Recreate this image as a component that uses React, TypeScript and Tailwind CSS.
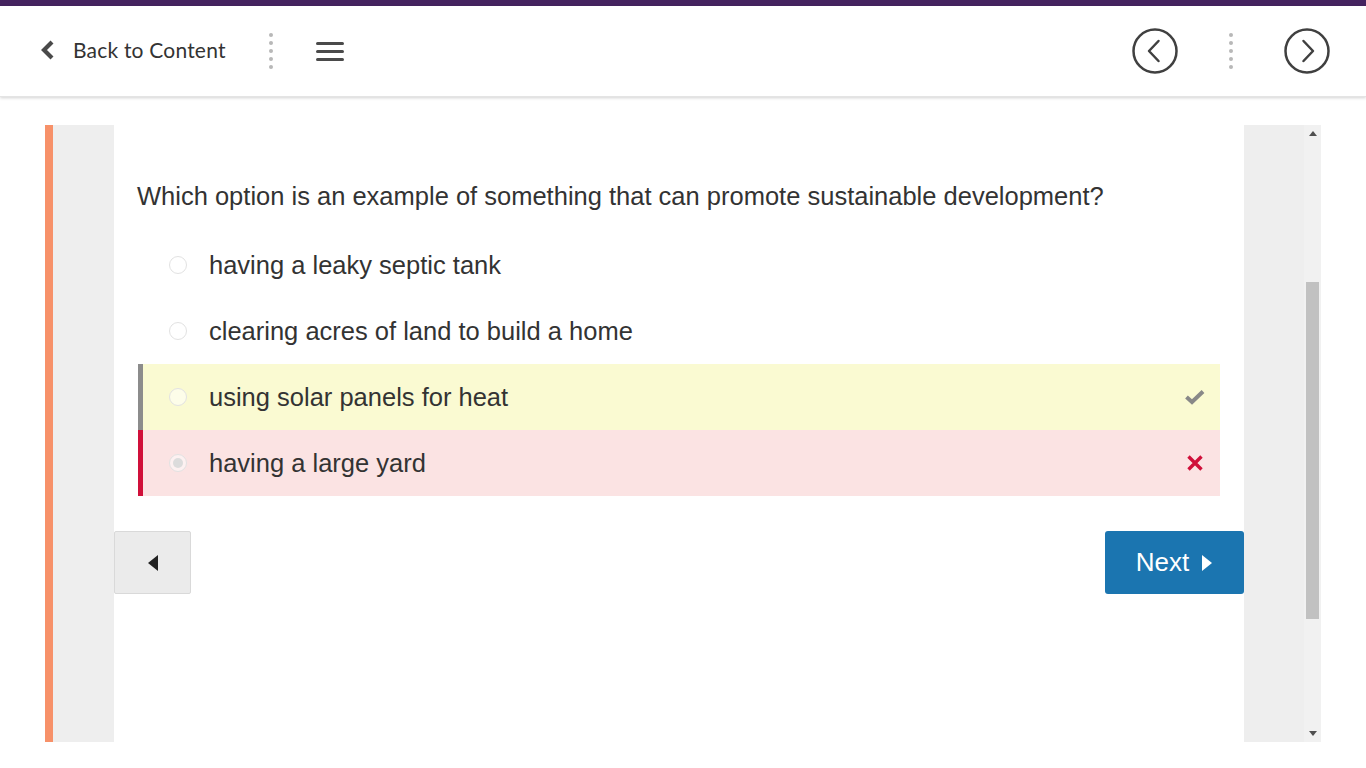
import React from "react"

const Dots = () => (
  <div className="flex flex-col items-center gap-[4px]">
    {[0, 1, 2, 3, 4].map((i) => (
      <span key={i} className="block w-[4px] h-[4px] rounded-full bg-[#b8b8b8]" />
    ))}
  </div>
)

const CircleArrow = ({ dir }: { dir: "left" | "right" }) => (
  <svg width="46" height="46" viewBox="0 0 46 46">
    <circle cx="23" cy="23" r="21.5" fill="none" stroke="#404040" strokeWidth="2.5" />
    {dir === "left" ? (
      <path d="M26.5 13 L17 23 L26.5 33" fill="none" stroke="#404040" strokeWidth="2.5" strokeLinecap="round" strokeLinejoin="round" />
    ) : (
      <path d="M19.5 13 L29 23 L19.5 33" fill="none" stroke="#404040" strokeWidth="2.5" strokeLinecap="round" strokeLinejoin="round" />
    )}
  </svg>
)

const options = [
  { text: "having a leaky septic tank", state: "none" },
  { text: "clearing acres of land to build a home", state: "none" },
  { text: "using solar panels for heat", state: "correct" },
  { text: "having a large yard", state: "wrong" },
]

export default function App() {
  return (
    <div className="min-h-[768px] bg-white" style={{ fontFamily: "'Liberation Sans', Arial, sans-serif" }}>
      <div className="h-[6px] bg-[#45235f]" />
      {/* header */}
      <header className="h-[91px] flex items-center justify-between bg-white shadow-[0_1px_3px_rgba(0,0,0,0.18)] border-b border-[#e4e4e4] relative z-10">
        <div className="flex items-center -mt-[3px]">
          <button className="flex items-center ml-[39px]">
            <svg width="18" height="24" viewBox="0 0 18 24">
              <path d="M13 4 L5 12 L13 20" fill="none" stroke="#4a4a4a" strokeWidth="4.2" strokeLinejoin="miter" />
            </svg>
            <span className="ml-[16px] text-[21px] text-[#333] tracking-[0.2px]" style={{ fontFamily: "Lato, sans-serif" }}>
              Back to Content
            </span>
          </button>
          <div className="ml-[43px] mt-[3px]">
            <Dots />
          </div>
          <div className="ml-[43px] mt-[3px] flex flex-col gap-[5px]">
            <span className="block w-[28px] h-[3px] bg-[#4a4a4a] rounded-sm" />
            <span className="block w-[28px] h-[3px] bg-[#4a4a4a] rounded-sm" />
            <span className="block w-[28px] h-[3px] bg-[#4a4a4a] rounded-sm" />
          </div>
        </div>
        <div className="flex items-center mr-[36px]">
          <CircleArrow dir="left" />
          <div className="mx-[51px]">
            <Dots />
          </div>
          <CircleArrow dir="right" />
        </div>
      </header>

      {/* content */}
      <div className="pt-[28px] pl-[45px] flex">
        <div className="w-[1276px] h-[617px] flex">
          <div className="w-[8px] bg-[#f79169]" />
          <div className="w-[61px] bg-[#eeeeee]" />
          <div className="w-[1130px] bg-white">
            <p className="mt-[56px] ml-[23px] text-[25.5px] leading-[30px] text-[#333]">
              Which option is an example of something that can promote sustainable development?
            </p>
            <div className="mt-[21px] ml-[24px] w-[1082px]">
              {options.map((o) => (
                <div
                  key={o.text}
                  className={
                    "h-[66px] flex items-center border-l-[5px] " +
                    (o.state === "correct"
                      ? "bg-[#fafad2] border-[#8c8c8c]"
                      : o.state === "wrong"
                      ? "bg-[#fbe3e3] border-[#d0103a]"
                      : "bg-white border-transparent")
                  }
                >
                  <span className="ml-[26px] w-[18px] h-[18px] rounded-full border border-[#e2e2e2] bg-white/50 flex items-center justify-center">
                    {o.state === "wrong" && <span className="block w-[10px] h-[10px] rounded-full bg-[#dcdcdc]" />}
                  </span>
                  <span className="ml-[22px] text-[25.5px] text-[#333] flex-1">{o.text}</span>
                  {o.state === "correct" && (
                    <svg width="22" height="18" viewBox="0 0 22 18" className="mr-[14px]">
                      <path d="M2.5 9 L8 14 L19 3.5" fill="none" stroke="#888" strokeWidth="4" />
                    </svg>
                  )}
                  {o.state === "wrong" && (
                    <svg width="18" height="18" viewBox="0 0 18 18" className="mr-[16px]">
                      <path d="M2.5 2.5 L15.5 15.5 M15.5 2.5 L2.5 15.5" stroke="#d0103a" strokeWidth="3.4" />
                    </svg>
                  )}
                </div>
              ))}
            </div>
            <div className="mt-[35px] flex justify-between">
              <button className="w-[77px] h-[63px] bg-[#ebebeb] border border-[#d9d9d9] rounded-[2px] flex items-center justify-center">
                <svg width="12" height="18" viewBox="0 0 12 18">
                  <path d="M11 1 L1 9 L11 17 Z" fill="#222" />
                </svg>
              </button>
              <button className="w-[139px] h-[63px] bg-[#1b75b0] rounded-[3px] flex items-center justify-center text-white text-[26px]">
                Next
                <svg width="12" height="18" viewBox="0 0 12 18" className="ml-[12px]">
                  <path d="M1 1 L11 9 L1 17 Z" fill="#fff" />
                </svg>
              </button>
            </div>
          </div>
          <div className="w-[60px] bg-[#eeeeee]" />
          <div className="w-[17px] bg-[#f1f1f1] flex flex-col items-center">
            <div className="h-[17px] flex items-center justify-center">
              <svg width="8" height="5" viewBox="0 0 8 5"><path d="M0 5 L4 0 L8 5 Z" fill="#505050" /></svg>
            </div>
            <div className="mt-[140px] w-[13px] h-[337px] bg-[#c1c1c1]" />
            <div className="flex-1" />
            <div className="h-[17px] flex items-center justify-center">
              <svg width="8" height="5" viewBox="0 0 8 5"><path d="M0 0 L8 0 L4 5 Z" fill="#505050" /></svg>
            </div>
          </div>
        </div>
      </div>
    </div>
  )
}
